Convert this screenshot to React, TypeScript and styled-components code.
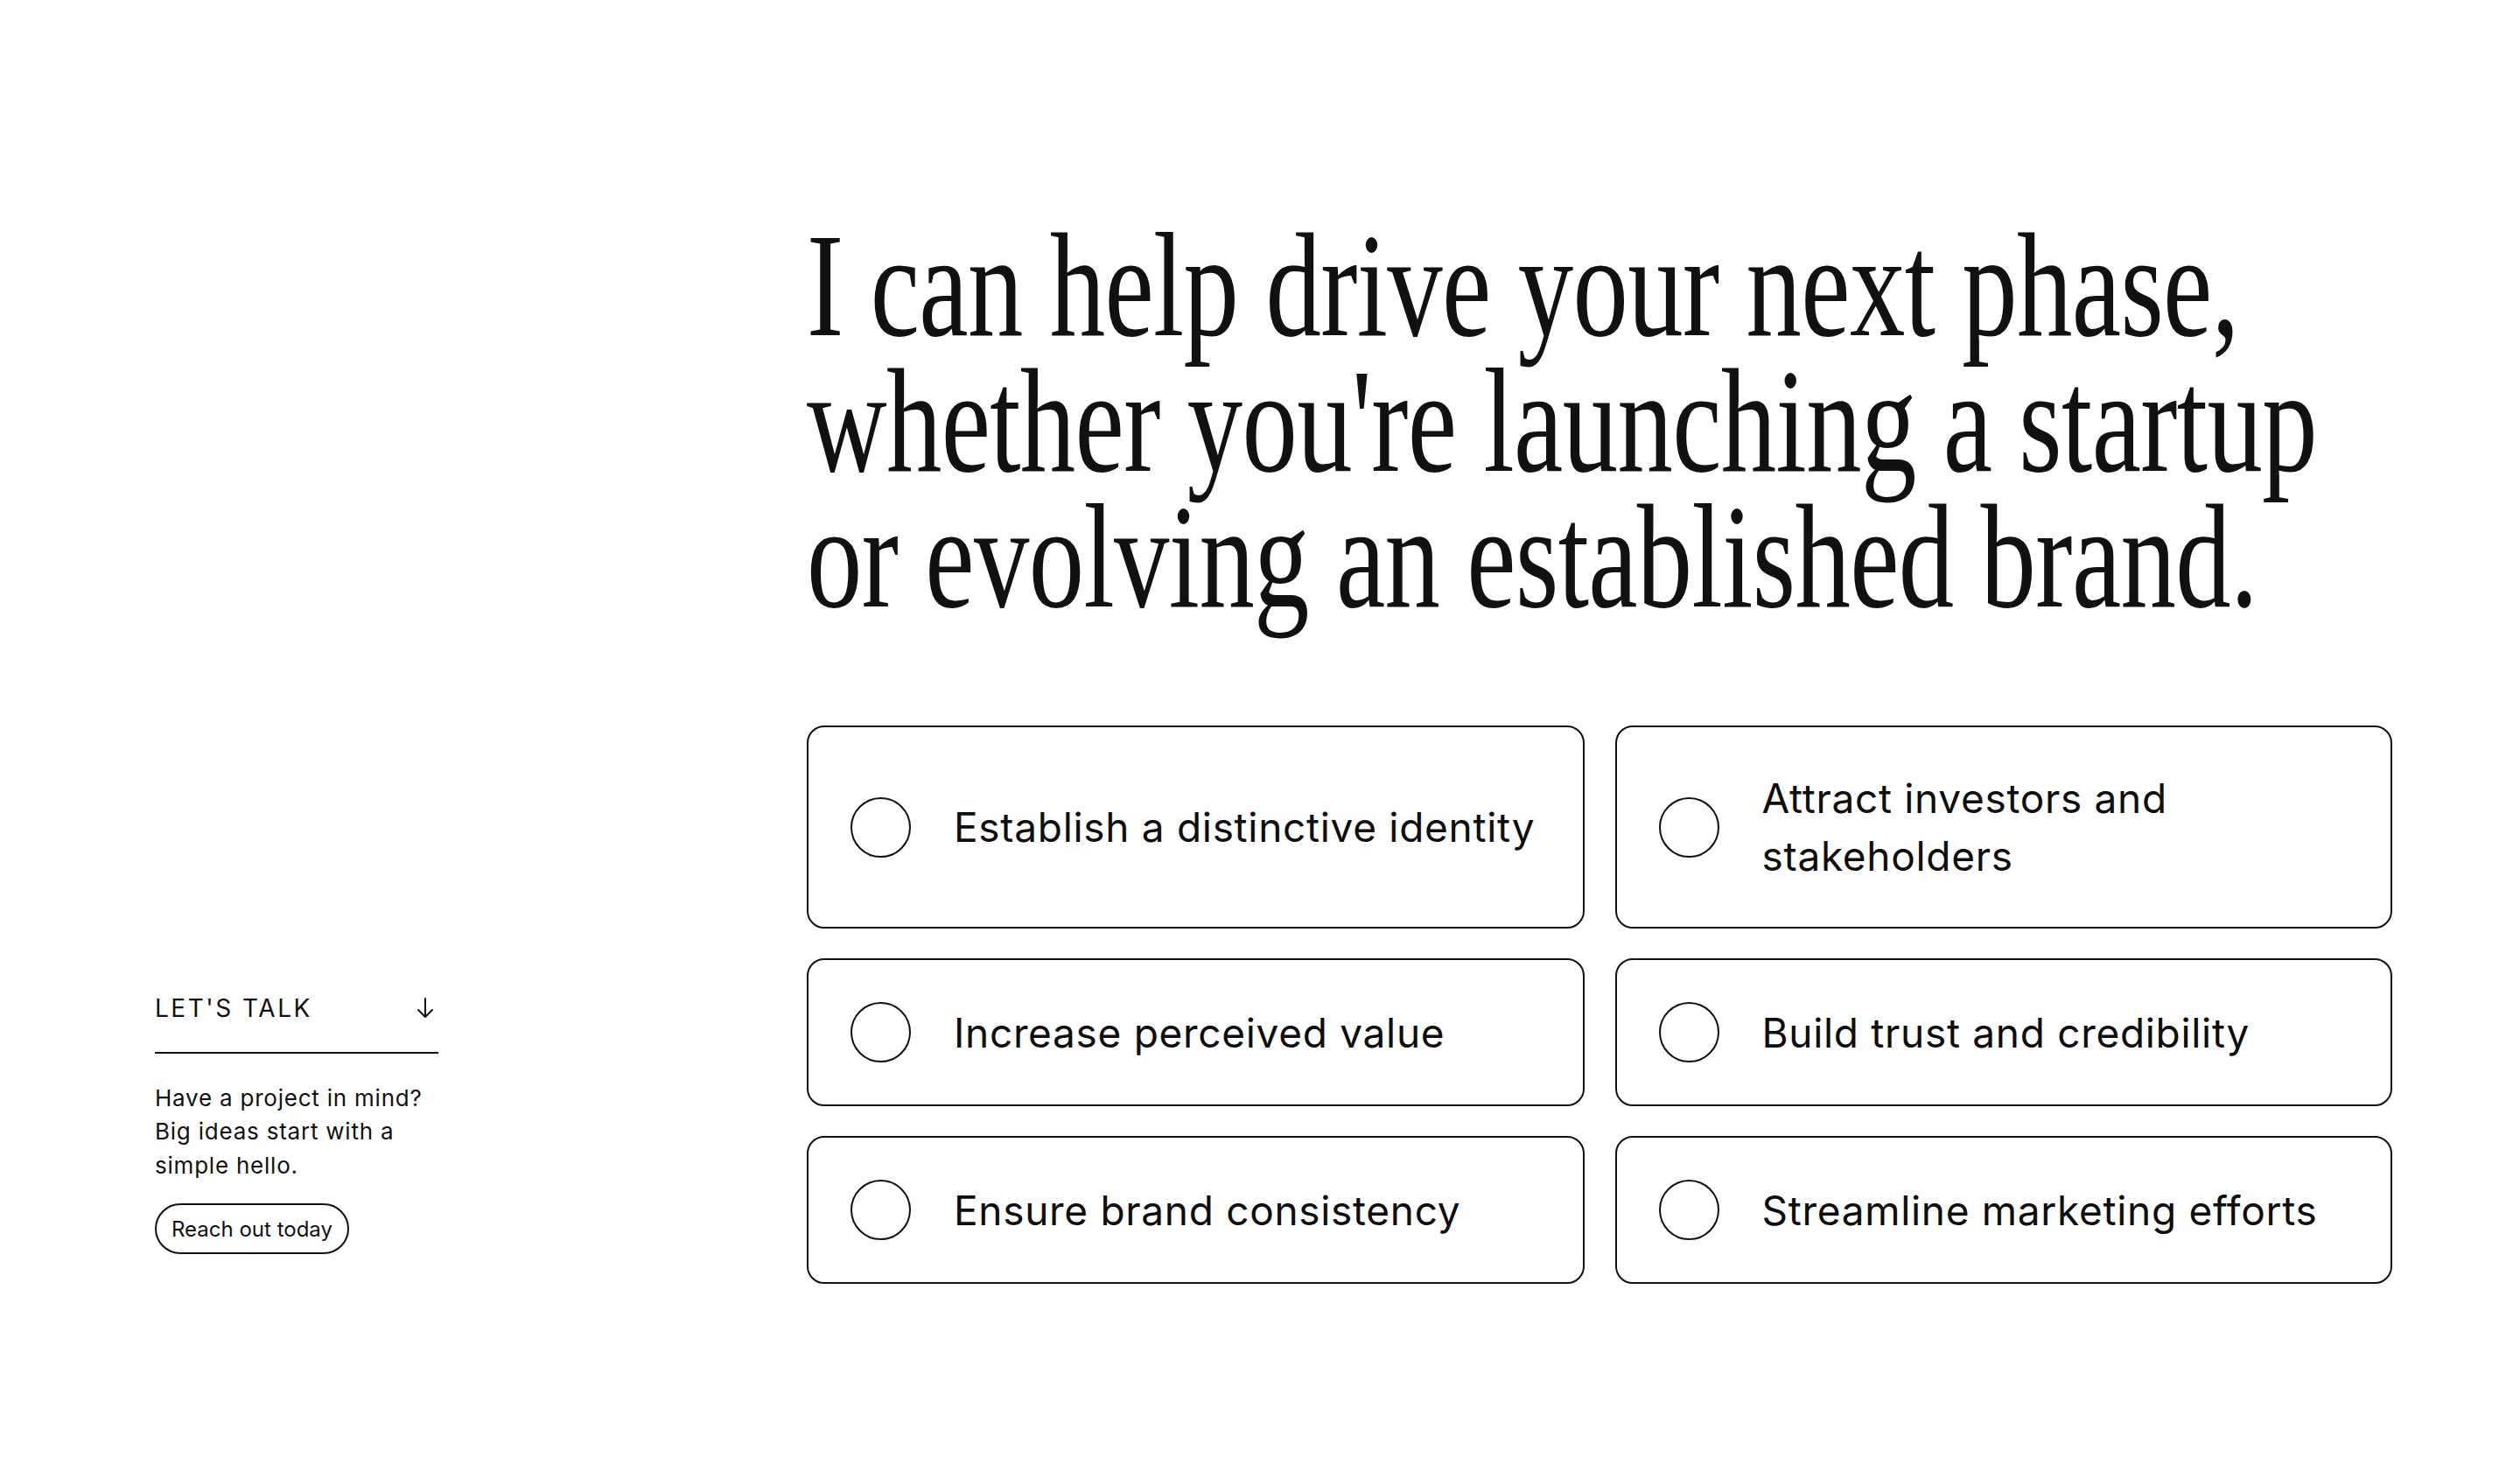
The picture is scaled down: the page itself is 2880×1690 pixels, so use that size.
import React from "react";
import styled, { createGlobalStyle } from "styled-components";

const GlobalStyle = createGlobalStyle`
  html, body {
    margin: 0;
    padding: 0;
    background: #ffffff;
  }
  body {
    font-family: Inter, "Liberation Sans", sans-serif;
    color: #111111;
    -webkit-font-smoothing: antialiased;
  }
  * { box-sizing: border-box; }
`;

const Page = styled.div`
  width: 2880px;
  height: 1690px;
  display: grid;
  grid-template-columns: 324px minmax(0, 1fr);
  column-gap: 421px;
  padding: 0 146px 0 177px;
  overflow: hidden;
`;

const Sidebar = styled.aside`
  align-self: end;
  margin-bottom: 257px;
  display: flex;
  flex-direction: column;
`;

const SideHeader = styled.div`
  display: flex;
  align-items: center;
  justify-content: space-between;
  padding: 0 4px 33px 0;
  border-bottom: 2px solid #111111;
`;

const SideLabel = styled.span`
  font-family: Inter, "Liberation Sans", sans-serif;
  font-size: 28px;
  letter-spacing: 0.09em;
  line-height: 34px;
  text-transform: uppercase;
`;

const SideText = styled.p`
  margin: 32px 0 0;
  font-family: Inter, "Liberation Sans", sans-serif;
  font-size: 26px;
  line-height: 38.5px;
  letter-spacing: 0.03em;
`;

const PillButton = styled.button`
  margin-top: 24px;
  align-self: flex-start;
  height: 58px;
  padding: 0 17px;
  border: 2px solid #111111;
  border-radius: 999px;
  background: transparent;
  color: #111111;
  font-family: Inter, "Liberation Sans", sans-serif;
  font-size: 24px;
  letter-spacing: 0;
  cursor: pointer;
`;

const Main = styled.main`
  min-width: 0;
  padding-top: 249px;
  display: flex;
  flex-direction: column;
`;

const Heading = styled.h1`
  margin: 0;
  font-family: "Liberation Serif", "Times New Roman", serif;
  font-weight: 400;
  font-size: 169px;
  line-height: 155px;
  letter-spacing: -0.005em;
  color: #111111;
  white-space: nowrap;
  transform: scaleX(0.75);
  transform-origin: left top;
`;

const HeadLine = styled.span`
  display: block;
`;

const CardGrid = styled.ul`
  list-style: none;
  margin: 115px 0 0;
  padding: 0;
  display: grid;
  grid-template-columns: 1fr 1fr;
  column-gap: 35px;
  row-gap: 34px;
`;

const Card = styled.li`
  min-height: 168px;
  display: flex;
  align-items: center;
  gap: 49px;
  padding: 48px 40px 48px 48px;
  border: 2px solid #111111;
  border-radius: 20px;
`;

const Radio = styled.span`
  flex: 0 0 69px;
  width: 69px;
  height: 69px;
  border: 2px solid #111111;
  border-radius: 50%;
`;

const CardText = styled.span`
  font-family: Inter, "Liberation Sans", sans-serif;
  font-size: 46px;
  line-height: 66px;
  letter-spacing: 0.015em;
  color: #0e0e0e;
`;

const ArrowDown = () => (
  <svg width="22" height="26" viewBox="0 0 22 26" fill="none" aria-hidden="true">
    <path d="M11 2 V23 M3 15 L11 23 L19 15" stroke="#111111" strokeWidth="2" strokeLinecap="round" strokeLinejoin="round" />
  </svg>
);

const goals = [
  "Establish a distinctive identity",
  "Attract investors and stakeholders",
  "Increase perceived value",
  "Build trust and credibility",
  "Ensure brand consistency",
  "Streamline marketing efforts",
];

export default function App() {
  return (
    <>
      <GlobalStyle />
      <Page>
        <Sidebar>
          <SideHeader>
            <SideLabel>Let's talk</SideLabel>
            <ArrowDown />
          </SideHeader>
          <SideText>
            Have a project in mind? Big ideas start with a simple hello.
          </SideText>
          <PillButton type="button">Reach out today</PillButton>
        </Sidebar>
        <Main>
          <Heading>
            <HeadLine>I can help drive your next phase,</HeadLine>
            <HeadLine>whether you're launching a startup</HeadLine>
            <HeadLine>or evolving an established brand.</HeadLine>
          </Heading>
          <CardGrid>
            {goals.map((g) => (
              <Card key={g}>
                <Radio />
                <CardText>{g}</CardText>
              </Card>
            ))}
          </CardGrid>
        </Main>
      </Page>
    </>
  );
}
